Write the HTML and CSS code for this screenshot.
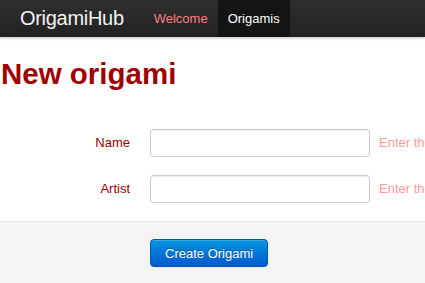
FILE: index.html
```html
<!DOCTYPE html>
<html lang="en">

<head>
    <meta charset="UTF-8">
    <meta name="viewport" content="width=device-width, initial-scale=1.0">
    <title>New origami - OrigamiHub</title>
    <link rel="stylesheet" href="styles.css">
</head>

<body>
    <div class="navbar">
        <a class="brand" href="#">OrigamiHub</a>
        <ul class="nav">
            <li><a href="#">Welcome</a></li>
            <li class="active"><a href="#">Origamis</a></li>
        </ul>
    </div>

    <div class="container">
        <h1>New origami</h1>
    </div>

    <form class="form-horizontal">
        <div class="control-group">
            <label class="control-label" for="origami_name">Name</label>
            <div class="controls">
                <input type="text" id="origami_name" name="origami[name]">
                <span class="help-inline">Enter the name</span>
            </div>
        </div>

        <div class="control-group">
            <label class="control-label" for="origami_artist">Artist</label>
            <div class="controls">
                <input type="text" id="origami_artist" name="origami[artist]">
                <span class="help-inline">Enter the artist</span>
            </div>
        </div>

        <div class="form-actions">
            <button type="submit" class="btn btn-primary">Create Origami</button>
        </div>
    </form>
</body>

</html>
```

FILE: styles.css
```css
body {
    margin: 0;
    font-family: "Liberation Sans", Arial, sans-serif;
    font-size: 13px;
    line-height: 18px;
    color: #333;
    background-color: #fff;
    overflow: hidden;
}

a {
    text-decoration: none;
}

.navbar {
    display: flex;
    align-items: stretch;
    height: 37px;
    padding-left: 20px;
    background-color: #222;
    background-image: linear-gradient(to bottom, #2e2e2e, #222);
    box-shadow: 0 1px 3px rgba(0, 0, 0, 0.25);
    white-space: nowrap;
}

.brand {
    display: flex;
    align-items: center;
    padding-bottom: 2px;
    margin-right: 20px;
    font-size: 20px;
    color: #f2f2f2;
    letter-spacing: -0.3px;
}

.nav {
    display: flex;
    margin: 0;
    padding: 0;
    list-style: none;
}

.nav li a {
    display: flex;
    align-items: center;
    height: 100%;
    padding: 0 10px;
    color: #ff8080;
}

.nav li.active a {
    background-color: #141414;
    color: #fff;
}

.container {
    padding: 19px 0 0 1px;
}

h1 {
    margin: 0;
    font-size: 29.5px;
    line-height: 36px;
    font-weight: bold;
    color: #a00000;
}

.form-horizontal {
    margin-top: 37px;
}

.control-group {
    display: flex;
    align-items: center;
    margin-bottom: 18px;
    overflow: hidden;
}

.control-label {
    flex-shrink: 0;
    width: 130px;
    padding-right: 20px;
    text-align: right;
    color: #990000;
}

.controls {
    display: flex;
    align-items: center;
    flex-shrink: 0;
    white-space: nowrap;
}

.controls input[type="text"] {
    flex-shrink: 0;
    width: 220px;
    height: 28px;
    padding: 4px 6px;
    box-sizing: border-box;
    border: 1px solid #ccc;
    border-radius: 3px;
    box-shadow: inset 0 1px 1px rgba(0, 0, 0, 0.075);
    font-family: inherit;
    font-size: 13px;
}

.help-inline {
    padding-left: 9px;
    color: #ff9999;
}

.form-actions {
    margin-top: 18px;
    padding: 17px 0 18px 150px;
    height: 100px;
    background-color: #f4f4f4;
    border-top: 1px solid #e3e3e3;
}

.btn {
    height: 28px;
    padding: 0 14px;
    font-family: inherit;
    font-size: 13px;
    color: #fff;
    border: 1px solid #0055b8;
    border-radius: 4px;
    background-color: #0074cc;
    background-image: linear-gradient(to bottom, #0595dd, #0058cc);
    box-shadow: inset 0 1px 0 rgba(255, 255, 255, 0.2), 0 1px 2px rgba(0, 0, 0, 0.05);
    text-shadow: 0 -1px 0 rgba(0, 0, 0, 0.25);
    cursor: pointer;
}
```
